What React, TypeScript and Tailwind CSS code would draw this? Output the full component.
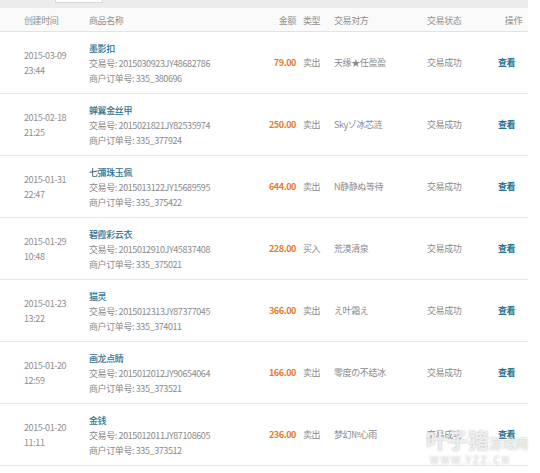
type Trade = {
  date: string;
  time: string;
  name: string;
  tradeNo: string;
  orderNo: string;
  amount: string;
  kind: string;
  partner: string;
};

const trades: Trade[] = [
  { date: '2015-03-09', time: '23:44', name: '墨影扣', tradeNo: '2015030923JY48682786', orderNo: '335_380696', amount: '79.00', kind: '卖出', partner: '天缘★任盈盈' },
  { date: '2015-02-18', time: '21:25', name: '蝉翼金丝甲', tradeNo: '2015021821JY82535974', orderNo: '335_377924', amount: '250.00', kind: '卖出', partner: 'Skyゾ冰芯涟' },
  { date: '2015-01-31', time: '22:47', name: '七彌珠玉佩', tradeNo: '2015013122JY15689595', orderNo: '335_375422', amount: '644.00', kind: '卖出', partner: 'N静静ぬ等待' },
  { date: '2015-01-29', time: '10:48', name: '碧霞彩云衣', tradeNo: '2015012910JY45837408', orderNo: '335_375021', amount: '228.00', kind: '买入', partner: '荒漠清泉' },
  { date: '2015-01-23', time: '13:22', name: '猫灵', tradeNo: '2015012313JY87377045', orderNo: '335_374011', amount: '366.00', kind: '卖出', partner: 'え叶霜え' },
  { date: '2015-01-20', time: '12:59', name: '画龙点睛', tradeNo: '2015012012JY90654064', orderNo: '335_373521', amount: '166.00', kind: '卖出', partner: '零度の不结冰' },
  { date: '2015-01-20', time: '11:11', name: '金钱', tradeNo: '2015012011JY87108605', orderNo: '335_373512', amount: '236.00', kind: '卖出', partner: '梦幻№心雨' },
];

const cols = 'grid grid-cols-[89px_170px_38px_37px_93px_71px_30px]';

export default function App() {
  return (
    <div
      className="relative w-[540px] h-[473px] overflow-hidden bg-white text-[9px] leading-[15px] tracking-[-0.4px] text-[#8a8a8a]"
      style={{ fontFamily: '"Noto Sans CJK SC", "Noto Sans", sans-serif' }}
    >
      <div className="w-[528px]">
        {/* top strip with tab stub */}
        <div className="h-[8px] bg-[#ececec] relative">
          <div className="absolute left-[55px] top-[-1px] w-[48px] h-[4px] bg-white border border-[#d8d8d8]" />
        </div>

        <div className={`${cols} h-[24px] items-center bg-[#fafafa] border-b border-[#e3e3e3] text-[#909090]`}>
          <div className="pl-[24px] pt-[1px]">创建时间</div>
          <div className="pt-[1px]">商品名称</div>
          <div className="text-right pr-[1px] pt-[1px]">金额</div>
          <div className="pl-[6px] pt-[1px]">类型</div>
          <div className="pt-[1px]">交易对方</div>
          <div className="pt-[1px]">交易状态</div>
          <div className="text-right pr-[6px] pt-[1px]">操作</div>
        </div>

        {trades.map((t) => (
          <div key={t.tradeNo} className={`${cols} h-[62px] items-center border-b border-[#e6e6e6]`}>
            <div className="pl-[24px] text-[#8e8e8e]">
              <div>{t.date}</div>
              <div>{t.time}</div>
            </div>
            <div className="pt-[1px]">
              <div className="text-[#2f7290] font-medium">{t.name}</div>
              <div>交易号: {t.tradeNo}</div>
              <div>商户订单号: {t.orderNo}</div>
            </div>
            <div className="text-right pr-[1px] font-bold text-[#e8782a]">{t.amount}</div>
            <div className="pl-[6px]">{t.kind}</div>
            <div className="whitespace-nowrap">{t.partner}</div>
            <div>交易成功</div>
            <div className="text-[#2a7391] font-bold">查看</div>
          </div>
        ))}
      </div>

      {/* site watermark */}
      <div className="absolute left-[426px] top-[428px] pointer-events-none text-white/75 select-none tracking-normal">
        <div className="text-[21px] leading-[23px] font-bold [text-shadow:0_0_2px_#aaa]">
          叶子猪<span className="text-[13px] align-middle font-normal">游戏网</span>
        </div>
        <div className="text-[10px] leading-[12px] tracking-[2px] pl-[4px] [text-shadow:0_0_2px_#aaa]">WWW.YZZ.CN</div>
      </div>
    </div>
  );
}
